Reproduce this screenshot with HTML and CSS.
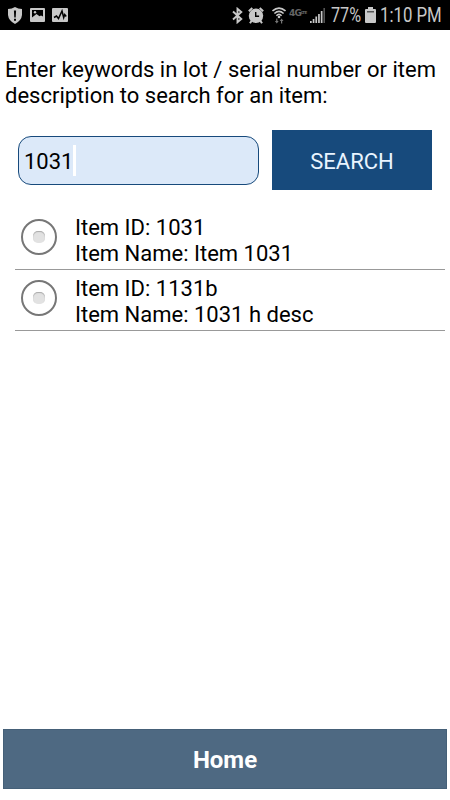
FILE: index.html
```html
<!DOCTYPE html>
<html lang="en">
<head>
    <meta charset="UTF-8">
    <meta name="viewport" content="width=device-width, initial-scale=1.0">
    <title>Item Search</title>
    <link rel="stylesheet" href="styles.css">
</head>
<body>
    <div class="statusbar">
        <div class="notifications">
            <svg width="14" height="17" viewBox="0 0 14 17">
                <path fill="#c8c8c8" d="M7 0 Q10 2 14 2 V8 Q13.500 13.500 7 17 Q.5 13.500 0 8 V2 Q4 2 7 0Z"/>
                <path fill="#000" d="M5.900 3.500h2.200l-.4 7H6.300zM6 11.800h2v1.900H6z"/>
            </svg>
            <svg width="15" height="14" viewBox="0 0 15 14">
                <rect width="15" height="14" rx="1" fill="#c8c8c8"/>
                <path fill="#000" d="M2 2h11v6.500l-2-1-1.500.8L6.500 6 2 9.500z"/>
                <circle cx="5" cy="4.300" r="1.200" fill="#c8c8c8"/>
            </svg>
            <svg width="16" height="14" viewBox="0 0 16 14">
                <rect width="16" height="14" rx="1" fill="#c8c8c8"/>
                <path fill="none" stroke="#000" stroke-width="1.500" d="M2 9.500 4.500 8l2 2.500L10 3l1.700 6.500 1-3 1.500 2"/>
            </svg>
        </div>
        <div class="system">
            <svg class="bluetooth" width="11" height="17" viewBox="0 0 11 17">
                <path fill="none" stroke="#c8c8c8" stroke-width="1.900" d="M1 4.500 9.300 12 5.500 15.200V1.800L9.300 5 1 12.500"/>
            </svg>
            <svg class="alarm" width="16" height="17" viewBox="0 0 16 17">
                <circle cx="8" cy="8.800" r="7.200" fill="#c8c8c8"/>
                <path fill="none" stroke="#c8c8c8" stroke-width="2" d="M.8 4.300 4.300 1.100M15.200 4.300 11.700 1.100M3.800 13.500 2 16.300M12.200 13.500 14 16.300"/>
                <path fill="none" stroke="#000" stroke-width="1.400" d="M7.700 5v4.200h3.400"/>
            </svg>
            <svg class="wifi" width="14" height="17" viewBox="0 0 14 17">
                <path fill="none" stroke="#c8c8c8" stroke-width="1.600" d="M.5 4Q7-1.800 13.500 4M2.400 6.500Q7 2.100 11.600 6.500M4.400 8.700Q7 6.100 9.600 8.700"/>
                <circle cx="7" cy="10" r="1.300" fill="#c8c8c8"/>
                <path fill="#777" d="M4.200 11.500h1.200v2.500h1.300l-1.900 2.500L2.900 14h1.300zM9 16.500h1.200V14h1.300l-1.900-2.500L7.700 14H9z"/>
            </svg>
            <span class="network">4G<small>LTE</small></span>
            <svg class="signal" width="15" height="15" viewBox="0 0 15 15">
                <path fill="#c8c8c8" d="M0 13h1.700v2H0zM2.700 11h1.700v4H2.700zM5.400 8.500h1.700V15H5.400zM8.100 6h1.700v9H8.100zM10.800 3h1.700v12h-1.700z"/>
                <path fill="#555" d="M13.400 0H15v15h-1.600z"/>
            </svg>
            <span class="percent">77%</span>
            <svg class="battery" width="11" height="16" viewBox="0 0 11 16">
                <path fill="#c8c8c8" d="M3 0h5v2h2q1 0 1 1v12q0 1-1 1H1q-1 0-1-1V3q0-1 1-1h2z"/>
                <path fill="#555" d="M2 4h7v1.500H2z"/>
            </svg>
            <span class="clock">1:10 PM</span>
        </div>
    </div>

    <div class="content">
        <p class="hint">Enter keywords in lot / serial number or item description to search for an item:</p>

        <div class="search">
            <div class="keyword" contenteditable="true" spellcheck="false">1031<span class="caret"></span></div>
            <button class="search-btn" type="button">SEARCH</button>
        </div>

        <div class="items">
            <div class="item">
                <span class="radio"></span>
                <div class="item-text">Item ID: 1031<br>Item Name: Item 1031</div>
            </div>
            <div class="item">
                <span class="radio"></span>
                <div class="item-text">Item ID: 1131b<br>Item Name: 1031 h desc</div>
            </div>
        </div>
    </div>

    <button class="home" type="button">Home</button>
</body>
</html>
```

FILE: styles.css
```css
* {
    box-sizing: border-box;
}

body {
    display: flex;
    flex-direction: column;
    height: 800px;
    margin: 0;
    background: #fff;
    color: #000;
    font-family: Roboto, sans-serif;
    font-size: 22px;
    line-height: 26px;
}

button {
    border: none;
    padding: 0;
    font-family: inherit;
    font-size: inherit;
}

/* Status bar */
.statusbar {
    display: flex;
    justify-content: space-between;
    height: 30px;
    padding: 0 9px 0 8px;
    background: #000;
    color: #c8c8c8;
}

.notifications,
.system {
    display: flex;
    align-items: center;
}

.notifications {
    gap: 7.5px;
}

.bluetooth {
    margin-right: 5px;
}

.alarm {
    margin-right: 8px;
}

.wifi {
    margin-right: 3px;
}

.network {
    width: 17px;
    margin-right: 4px;
    padding-bottom: 5px;
    color: #666;
    font-family: "DejaVu Sans", sans-serif;
    font-size: 9px;
    font-weight: bold;
    letter-spacing: -0.8px;
    line-height: 9px;
    white-space: nowrap;
}

.network small {
    font-size: 4px;
    letter-spacing: -0.6px;
    vertical-align: 2px;
}

.signal {
    margin-right: 6px;
}

/* narrow digits */
.percent,
.clock {
    padding-top: 2px;
    font-size: 19.5px;
    white-space: nowrap;
    transform: scaleX(0.86);
    transform-origin: left;
}

.percent {
    width: 30px;
    margin-right: 4px;
    transform: scaleX(0.83);
}

.clock {
    width: 61px;
    margin-left: 4px;
}

/* Search form */
.content {
    flex: 1;
}

.hint {
    margin: 0;
    padding: 27px 5px 0;
}

.search {
    display: flex;
    align-items: center;
    gap: 13px;
    padding: 21px 17px 0 18px;
}

.keyword {
    display: flex;
    align-items: center;
    width: 241px;
    height: 49px;
    margin-top: 1px;
    padding: 2px 0 0 5px;
    border: 1.5px solid #174a7c;
    border-radius: 13px;
    background: #dce9f9;
    outline: none;
}

.caret {
    width: 3px;
    height: 31px;
    margin-bottom: 2px;
    background: #fff;
}

.search-btn {
    width: 160px;
    height: 60px;
    padding-top: 2px;
    background: #174a7c;
    color: #e9f4ff;
}

/* Results */
.items {
    padding: 19px 5px 0 15px;
}

.item {
    display: flex;
    height: 61px;
    padding: 5px 0 0 6px;
    border-bottom: 1px solid #999;
}

.radio {
    display: flex;
    align-items: center;
    justify-content: center;
    width: 36px;
    height: 36px;
    margin: 5px 18px 0 0;
    border: 2px solid #777;
    border-radius: 50%;
}

.radio::after {
    content: "";
    width: 12px;
    height: 12px;
    border-radius: 5px;
    background: #e2e2e2;
    box-shadow: inset 0 1px 1px #aaa;
}

.item-text {
    padding-top: 1px;
}

/* Footer */
.home {
    height: 60px;
    margin: 0 3px 11px;
    padding-top: 2px;
    border: 1px solid #456078;
    background: #4e6982;
    color: #fff;
    font-size: 24px;
    font-weight: bold;
}
```
